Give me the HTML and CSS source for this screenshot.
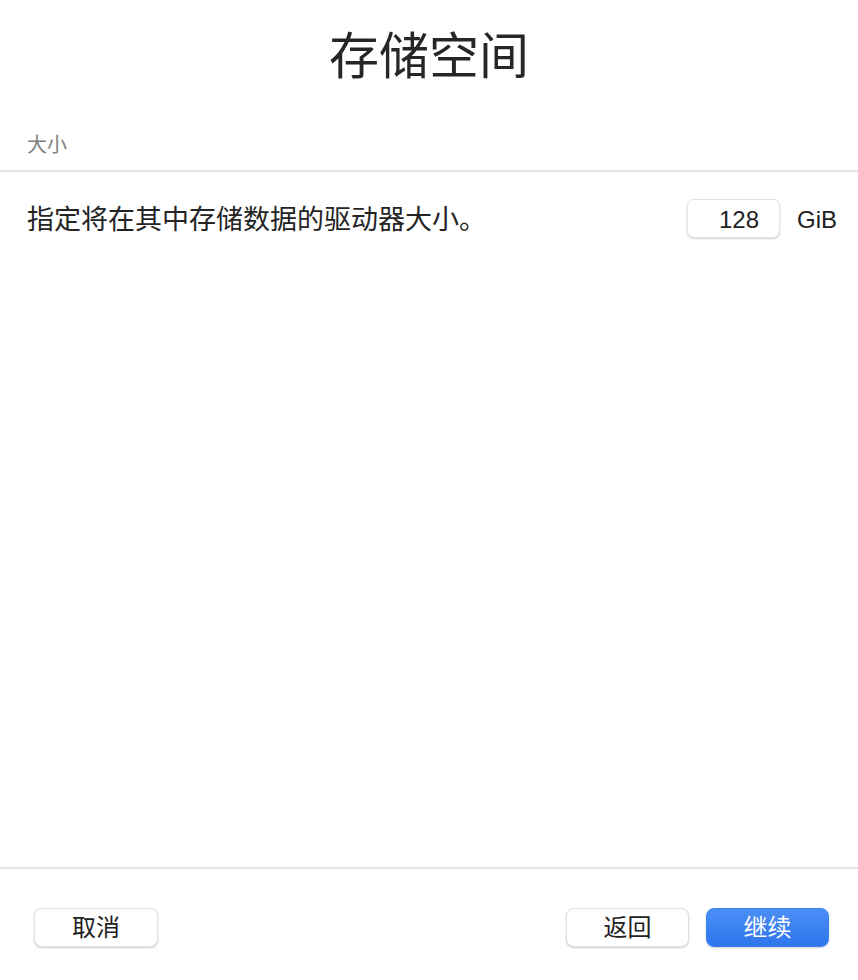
FILE: index.html
```html
<!DOCTYPE html>
<html lang="zh-CN">
<head>
<meta charset="utf-8">
<title>存储空间</title>
<link rel="stylesheet" href="styles.css">
</head>
<body>
<div class="dialog">
  <main class="main">
    <h1 class="title">存储空间</h1>
    <div class="section-label">大小</div>
    <div class="divider"></div>
    <div class="row">
      <span class="desc">指定将在其中存储数据的驱动器大小。</span>
      <span class="size-field">
        <span class="size-input">128</span>
        <span class="unit">GiB</span>
      </span>
    </div>
  </main>
  <footer class="footer">
    <button class="btn">取消</button>
    <div class="footer-right">
      <button class="btn">返回</button>
      <button class="btn btn-primary">继续</button>
    </div>
  </footer>
</div>
</body>
</html>
```
FILE: styles.css
```css
* { box-sizing: border-box; }
html, body {
  margin: 0;
  padding: 0;
  background: #ffffff;
}
body {
  font-family: "Liberation Sans", "Noto Sans CJK SC", sans-serif;
  color: #242424;
}
.dialog {
  width: 858px;
  height: 980px;
  display: flex;
  flex-direction: column;
}
.main {
  flex: 1;
  display: flex;
  flex-direction: column;
}
.title {
  margin: 0;
  padding-top: 26px;
  font-size: 50px;
  line-height: 62px;
  font-weight: 400;
  text-align: center;
  color: #262626;
}
.section-label {
  margin-top: 45px;
  padding-left: 27px;
  font-size: 20px;
  line-height: 24px;
  color: #7f7f7f;
}
.divider {
  margin-top: 13px;
  height: 2px;
  background: #e6e6e6;
}
.row {
  margin-top: 27px;
  display: flex;
  align-items: center;
  justify-content: space-between;
  padding: 0 21px 0 27px;
  height: 39px;
}
.desc {
  font-size: 27px;
  line-height: 39px;
  padding-top: 3px;
  color: #242424;
}
.size-field {
  display: flex;
  align-items: center;
  gap: 17px;
}
.size-input {
  width: 93px;
  height: 39px;
  border: 1px solid #e3e3e3;
  border-radius: 7px;
  box-shadow: 0 1px 2px rgba(0, 0, 0, 0.18);
  background: #fff;
  font-size: 24px;
  line-height: 39px;
  text-align: right;
  padding-right: 20px;
  color: #222;
}
.unit {
  font-size: 24px;
  padding-top: 2px;
  color: #222;
}
.footer {
  border-top: 2px solid #e6e6e6;
  height: 113px;
  padding: 39px 29px 0 34px;
  display: flex;
  justify-content: space-between;
  align-items: flex-start;
}
.footer-right {
  display: flex;
  gap: 17px;
}
.btn {
  width: 124px;
  height: 39px;
  border: 1px solid #e0e0e0;
  border-radius: 8px;
  background: #fff;
  box-shadow: 0 1px 2px rgba(0, 0, 0, 0.2);
  font-family: "Liberation Sans", "Noto Sans CJK SC", sans-serif;
  font-size: 24px;
  line-height: 37px;
  color: #222;
  padding: 0;
}
.footer-right .btn {
  width: 123px;
}
.btn-primary {
  border-color: #3a82f2;
  background: linear-gradient(#4a8ff6, #2f75ed);
  color: #fff;
}
```
